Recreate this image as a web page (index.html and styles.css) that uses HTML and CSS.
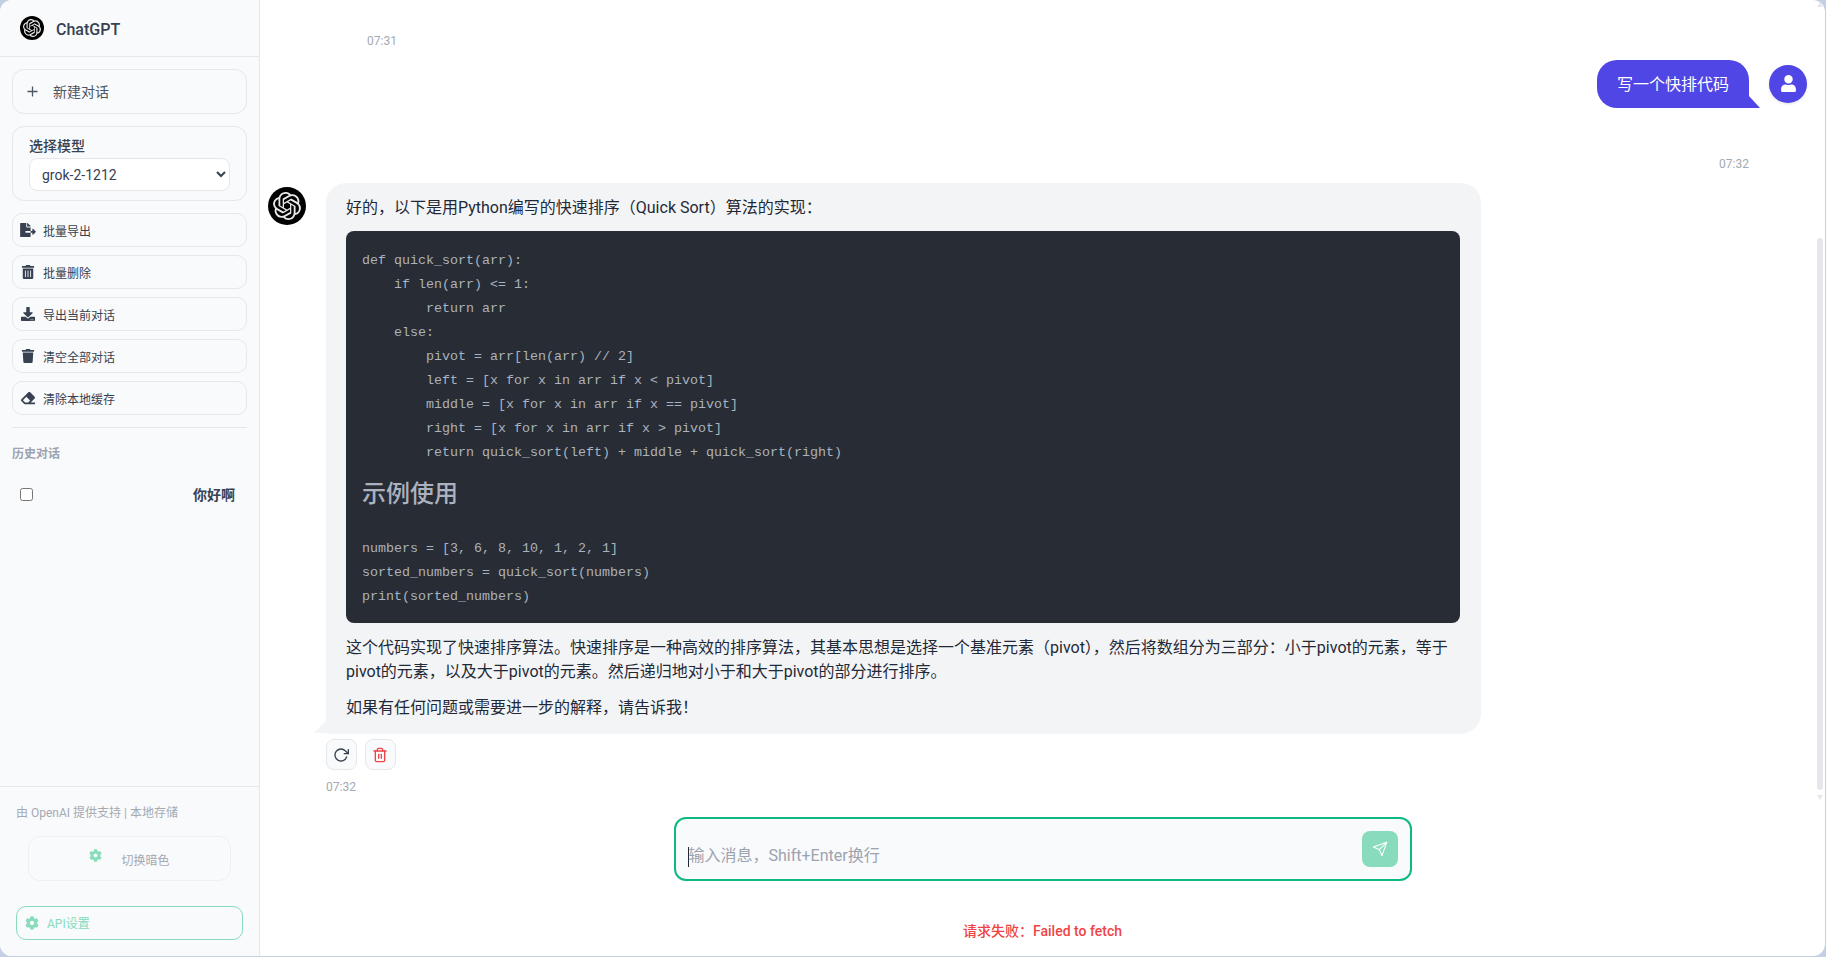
FILE: index.html
```html
<!DOCTYPE html>
<html lang="zh-CN">
<head>
<meta charset="utf-8">
<title>ChatGPT</title>
<link rel="stylesheet" href="styles.css">
</head>
<body>
<svg class="defs" width="0" height="0" aria-hidden="true">
  <symbol id="openai" viewBox="0 0 24 24"><path d="M22.2819 9.8211a5.9847 5.9847 0 0 0-.5157-4.9108 6.0462 6.0462 0 0 0-6.5098-2.9A6.0651 6.0651 0 0 0 4.9807 4.1818a5.9847 5.9847 0 0 0-3.9977 2.9 6.0462 6.0462 0 0 0 .7427 7.0966 5.98 5.98 0 0 0 .511 4.9107 6.051 6.051 0 0 0 6.5146 2.9001A5.9847 5.9847 0 0 0 13.2599 24a6.0557 6.0557 0 0 0 5.7718-4.2058 5.9894 5.9894 0 0 0 3.9977-2.9001 6.0557 6.0557 0 0 0-.7475-7.0729zm-9.022 12.6081a4.4755 4.4755 0 0 1-2.8764-1.0408l.1419-.0804 4.7783-2.7582a.7948.7948 0 0 0 .3927-.6813v-6.7369l2.02 1.1686a.071.071 0 0 1 .038.052v5.5826a4.504 4.504 0 0 1-4.4945 4.4944zm-9.6607-4.1254a4.4708 4.4708 0 0 1-.5346-3.0137l.142.0852 4.783 2.7582a.7712.7712 0 0 0 .7806 0l5.8428-3.3685v2.3324a.0804.0804 0 0 1-.0332.0615L9.74 19.9502a4.4992 4.4992 0 0 1-6.1408-1.6464zM2.3408 7.8956a4.485 4.485 0 0 1 2.3655-1.9728V11.6a.7664.7664 0 0 0 .3879.6765l5.8144 3.3543-2.0201 1.1685a.0757.0757 0 0 1-.071 0l-4.8303-2.7865A4.504 4.504 0 0 1 2.3408 7.872zm16.5963 3.8558L13.1038 8.364 15.1192 7.2a.0757.0757 0 0 1 .071 0l4.8303 2.7913a4.4944 4.4944 0 0 1-.6765 8.1042v-5.6772a.79.79 0 0 0-.407-.667zm2.0107-3.0231l-.142-.0852-4.7735-2.7818a.7759.7759 0 0 0-.7854 0L9.409 9.2297V6.8974a.0662.0662 0 0 1 .0284-.0615l4.8303-2.7866a4.4992 4.4992 0 0 1 6.6802 4.66zM8.3065 12.863l-2.02-1.1638a.0804.0804 0 0 1-.038-.0567V6.0742a4.4992 4.4992 0 0 1 7.3757-3.4537l-.142.0805L8.704 5.459a.7948.7948 0 0 0-.3927.6813zm1.0976-2.3654l2.602-1.4998 2.6069 1.4998v2.9994l-2.5974 1.4997-2.6067-1.4997Z"/></symbol>
  <symbol id="cog" viewBox="0 0 512 512"><path d="M487.4 315.7l-42.6-24.6c4.3-23.2 4.3-47 0-70.2l42.6-24.6c4.9-2.8 7.1-8.6 5.5-14-11.1-35.6-30-67.8-54.7-94.6-3.8-4.1-10-5.1-14.8-2.3L380.8 110c-17.9-15.4-38.5-27.3-60.8-35.1V25.8c0-5.6-3.9-10.5-9.4-11.7-36.7-8.2-74.3-7.8-109.2 0-5.5 1.2-9.4 6.1-9.4 11.7V75c-22.2 7.9-42.8 19.8-60.8 35.1L88.7 85.5c-4.9-2.8-11-1.9-14.8 2.3-24.7 26.7-43.6 58.9-54.7 94.6-1.7 5.4.6 11.2 5.5 14L67.3 221c-4.3 23.2-4.3 47 0 70.2l-42.6 24.6c-4.9 2.8-7.1 8.6-5.5 14 11.1 35.6 30 67.8 54.7 94.6 3.8 4.1 10 5.1 14.8 2.3l42.6-24.6c17.9 15.4 38.5 27.3 60.8 35.1v49.2c0 5.6 3.9 10.5 9.4 11.7 36.7 8.2 74.3 7.8 109.2 0 5.5-1.2 9.4-6.1 9.4-11.7v-49.2c22.2-7.9 42.8-19.8 60.8-35.1l42.6 24.6c4.9 2.8 11 1.9 14.8-2.3 24.7-26.7 43.6-58.9 54.7-94.6 1.5-5.5-.7-11.3-5.6-14.1zM256 336c-44.1 0-80-35.9-80-80s35.9-80 80-80 80 35.9 80 80-35.9 80-80 80z"/></symbol>
</svg>
<div class="app">
  <aside class="sidebar">
    <header class="brand">
      <span class="logo logo-small"><svg class="logo-mark"><use href="#openai"/></svg></span>
      <span class="brand-name">ChatGPT</span>
    </header>
    <div class="side-body">
      <button class="new-chat">
        <svg class="plus" viewBox="0 0 12 12"><path d="M6 .5v11M.5 6h11"/></svg>
        <span>新建对话</span>
      </button>
      <div class="model-box">
        <label class="model-label" for="model">选择模型</label>
        <select class="model-select" id="model"><option>grok-2-1212</option></select>
      </div>
      <div class="actions">
        <button class="action"><svg class="fa" viewBox="0 0 576 512"><path d="M384 121.9c0-6.3-2.5-12.4-7-16.9L279.1 7c-4.5-4.5-10.6-7-17-7H256v128h128zM571 308l-95.7-96.4c-10.1-10.1-27.4-3-27.4 11.3V288h-64v64h64v65.2c0 14.3 17.3 21.4 27.4 11.3L571 332c6.6-6.6 6.6-17.4 0-24zm-379 28v-32c0-8.8 7.2-16 16-16h176V160H248c-13.2 0-24-10.8-24-24V0H24C10.7 0 0 10.7 0 24v464c0 13.3 10.7 24 24 24h336c13.3 0 24-10.7 24-24V352H208c-8.8 0-16-7.2-16-16z"/></svg><span>批量导出</span></button>
        <button class="action"><svg class="fa" viewBox="0 0 448 512"><path d="M32 464a48 48 0 0 0 48 48h288a48 48 0 0 0 48-48V128H32zm272-256a16 16 0 0 1 32 0v224a16 16 0 0 1-32 0zm-96 0a16 16 0 0 1 32 0v224a16 16 0 0 1-32 0zm-96 0a16 16 0 0 1 32 0v224a16 16 0 0 1-32 0zM432 32H312l-9.4-18.7A24 24 0 0 0 281.1 0H166.8a23.72 23.72 0 0 0-21.4 13.3L136 32H16A16 16 0 0 0 0 48v32a16 16 0 0 0 16 16h416a16 16 0 0 0 16-16V48a16 16 0 0 0-16-16z"/></svg><span>批量删除</span></button>
        <button class="action"><svg class="fa" viewBox="0 0 512 512"><path d="M216 0h80c13.3 0 24 10.7 24 24v168h87.7c17.8 0 26.7 21.5 14.1 34.1L269.7 378.3c-7.5 7.5-19.8 7.5-27.3 0L90.1 226.1c-12.6-12.6-3.7-34.1 14.1-34.1H192V24c0-13.3 10.7-24 24-24zm296 376v112c0 13.3-10.7 24-24 24H24c-13.3 0-24-10.7-24-24V376c0-13.3 10.7-24 24-24h146.7l49 49c20.1 20.1 52.5 20.1 72.6 0l49-49H488c13.3 0 24 10.7 24 24zm-124 88c0-11-9-20-20-20s-20 9-20 20 9 20 20 20 20-9 20-20zm64 0c0-11-9-20-20-20s-20 9-20 20 9 20 20 20 20-9 20-20z"/></svg><span>导出当前对话</span></button>
        <button class="action"><svg class="fa" viewBox="0 0 448 512"><path d="M432 32H312l-9.4-18.7A24 24 0 0 0 281.1 0H166.8a23.72 23.72 0 0 0-21.4 13.3L136 32H16A16 16 0 0 0 0 48v32a16 16 0 0 0 16 16h416a16 16 0 0 0 16-16V48a16 16 0 0 0-16-16zM53.2 467a48 48 0 0 0 47.9 45h245.8a48 48 0 0 0 47.9-45L416 128H32z"/></svg><span>清空全部对话</span></button>
        <button class="action"><svg class="fa" viewBox="0 0 512 512"><path d="M497.941 273.941c18.745-18.745 18.745-49.137 0-67.882l-160-160c-18.745-18.745-49.136-18.746-67.883 0l-256 256c-18.745 18.745-18.745 49.137 0 67.882l96 96A48.004 48.004 0 0 0 144 480h356c6.627 0 12-5.373 12-12v-40c0-6.627-5.373-12-12-12H355.883l142.058-142.059zm-302.627-62.627l137.373 137.373L265.373 416H150.628l-80-80 124.686-124.686z"/></svg><span>清除本地缓存</span></button>
      </div>
      <hr class="divider">
      <div class="history-title">历史对话</div>
      <label class="history-item">
        <input class="history-check" type="checkbox">
        <span class="history-name">你好啊</span>
      </label>
    </div>
    <footer class="side-footer">
      <div class="powered">由 OpenAI 提供支持 | 本地存储</div>
      <button class="theme-btn"><svg class="theme-cog"><use href="#cog"/></svg><span>切换暗色</span></button>
      <button class="api-btn"><svg class="api-cog"><use href="#cog"/></svg><span>API设置</span></button>
    </footer>
  </aside>
  <main class="main">
    <section class="messages">
      <div class="time time-prev">07:31</div>
      <div class="user-row">
        <div class="user-bubble">写一个快排代码</div>
        <span class="user-avatar"><svg viewBox="0 0 448 512"><path d="M224 256c70.7 0 128-57.3 128-128S294.7 0 224 0 96 57.3 96 128s57.3 128 128 128zm89.6 32h-16.7c-22.2 10.2-46.9 16-72.9 16s-50.6-5.8-72.9-16h-16.7C60.2 288 0 348.2 0 422.4V464c0 26.5 21.5 48 48 48h352c26.5 0 48-21.5 48-48v-41.6c0-74.2-60.2-134.4-134.4-134.4z"/></svg></span>
      </div>
      <div class="time time-user">07:32</div>
      <div class="bot-row">
        <span class="logo logo-large"><svg class="logo-mark"><use href="#openai"/></svg></span>
        <div class="bot-col">
          <div class="bot-bubble">
            <p class="para para-first">好的，以下是用Python编写的快速排序（Quick Sort）算法的实现：</p>
            <div class="code">
<pre class="code-text">def quick_sort(arr):
    if len(arr) &lt;= 1:
        return arr
    else:
        pivot = arr[len(arr) // 2]
        left = [x for x in arr if x &lt; pivot]
        middle = [x for x in arr if x == pivot]
        right = [x for x in arr if x &gt; pivot]
        return quick_sort(left) + middle + quick_sort(right)</pre>
              <h2 class="code-heading">示例使用</h2>
<pre class="code-text">numbers = [3, 6, 8, 10, 1, 2, 1]
sorted_numbers = quick_sort(numbers)
print(sorted_numbers)</pre>
            </div>
            <p class="para para-after-code">这个代码实现了快速排序算法。快速排序是一种高效的排序算法，其基本思想是选择一个基准元素（pivot），然后将数组分为三部分：小于pivot的元素，等于pivot的元素，以及大于pivot的元素。然后递归地对小于和大于pivot的部分进行排序。</p>
            <p class="para">如果有任何问题或需要进一步的解释，请告诉我！</p>
          </div>
          <div class="msg-actions">
            <button class="msg-btn"><svg viewBox="0 0 24 24"><polyline points="23 4 23 10 17 10"/><path d="M20.49 15a9 9 0 1 1-2.12-9.36L23 10"/></svg></button>
            <button class="msg-btn msg-btn-danger"><svg viewBox="0 0 24 24"><polyline points="3 6 5 6 21 6"/><path d="M19 6v14a2 2 0 0 1-2 2H7a2 2 0 0 1-2-2V6m3 0V4a2 2 0 0 1 2-2h4a2 2 0 0 1 2 2v2"/><line x1="10" y1="11" x2="10" y2="17"/><line x1="14" y1="11" x2="14" y2="17"/></svg></button>
          </div>
          <div class="time time-bot">07:32</div>
        </div>
      </div>
      <div class="scrollbar" aria-hidden="true">
        <span class="arrow arrow-up"></span>
        <span class="thumb"></span>
        <span class="arrow arrow-down"></span>
      </div>
    </section>
    <section class="composer">
      <div class="input-box">
        <span class="caret"></span>
        <textarea class="input" rows="1" placeholder="输入消息，Shift+Enter换行"></textarea>
        <button class="send"><svg viewBox="0 0 24 24"><line x1="22" y1="2" x2="11" y2="13"/><polygon points="22 2 15 22 11 13 2 9 22 2"/></svg></button>
      </div>
      <div class="error">请求失败：Failed to fetch</div>
    </section>
  </main>
</div>
</body>
</html>
```

FILE: styles.css
```css
* { box-sizing: border-box; }
html, body { margin: 0; height: 100%; }
body {
  background: #c3cfe2;
  font-family: Roboto, "Noto Sans CJK SC", sans-serif;
  color: #1f2937;
  overflow: hidden;
}
button, select, textarea { font-family: inherit; }
.defs { position: absolute; }

.app {
  width: 1825px;
  height: 956px;
  display: flex;
  background: #fff;
  border-radius: 12px;
  overflow: hidden;
}

/* Sidebar */
.sidebar {
  width: 260px;
  flex: none;
  display: flex;
  flex-direction: column;
  background: #f9fafb;
  border-right: 1px solid #e5e7eb;
}
.brand {
  height: 57px;
  flex: none;
  display: flex;
  align-items: center;
  gap: 12px;
  padding: 0 20px;
  border-bottom: 1px solid #e5e7eb;
}
.brand-name { padding-top: 2px; font-size: 16px; font-weight: 500; color: #374151; }
.logo {
  display: flex;
  align-items: center;
  justify-content: center;
  flex: none;
  background: #000;
  border-radius: 50%;
}
.logo-mark { fill: #e8e8e8; display: block; }
.logo-small { width: 24px; height: 24px; }
.logo-small .logo-mark { width: 18px; height: 18px; }
.logo-large { width: 38px; height: 38px; margin-top: 4px; }
.logo-large .logo-mark { width: 28px; height: 28px; }

.side-body {
  flex: 1;
  padding: 12px;
  display: flex;
  flex-direction: column;
  min-height: 0;
}
.new-chat {
  height: 45px;
  display: flex;
  align-items: center;
  gap: 15px;
  padding: 0 14px 1px;
  background: #f9fafb;
  border: 1px solid #e5e7eb;
  border-radius: 12px;
  font-size: 14px;
  color: #4b5563;
}
.plus { width: 11px; height: 11px; fill: none; stroke: #4b5563; stroke-width: 1.4; }
.model-box {
  margin-top: 12px;
  height: 75px;
  padding: 9px 16px 0;
  border: 1px solid #e5e7eb;
  border-radius: 12px;
}
.model-label {
  display: block;
  font-size: 14px;
  font-weight: 500;
  line-height: 20px;
  color: #374151;
  margin-bottom: 2px;
}
.model-select {
  width: 100%;
  height: 33px;
  padding: 0 8px;
  font-size: 14px;
  color: #374151;
  background: #fff;
  border: 1px solid #e5e7eb;
  border-radius: 8px;
}
.actions {
  margin-top: 12px;
  display: flex;
  flex-direction: column;
  gap: 8px;
}
.action {
  height: 34px;
  display: flex;
  align-items: center;
  gap: 7px;
  padding: 0 7px;
  background: #f9fafb;
  border: 1px solid #e5e7eb;
  border-radius: 10px;
  font-size: 12px;
  color: #374151;
}
.fa { width: 16px; height: 14px; fill: #374151; flex: none; }
.divider {
  margin: 12px 0 0;
  border: 0;
  border-top: 1px solid #e5e7eb;
}
.history-title {
  margin-top: 18px;
  font-size: 12px;
  font-weight: 700;
  line-height: 16px;
  color: #9ca3af;
}
.history-item {
  margin-top: 22px;
  display: flex;
  align-items: center;
  justify-content: space-between;
  padding: 0 12px 0 8px;
}
.history-check { width: 13px; height: 13px; margin: 1px 0 0; }
.history-name { font-size: 14px; font-weight: 700; color: #374151; }

.side-footer {
  flex: none;
  height: 170px;
  padding: 18px 16px 0;
  border-top: 1px solid #e5e7eb;
}
.powered { font-size: 12px; line-height: 16px; color: #a4a9b2; }
.theme-btn {
  display: flex;
  align-items: center;
  justify-content: center;
  gap: 19px;
  width: 203px;
  height: 45px;
  margin: 15px 0 0 12px;
  padding-top: 3px;
  background: #f9fafb;
  border: 1px solid #eff0f3;
  border-radius: 12px;
  font-size: 12px;
  color: #a4a9b2;
}
.theme-cog { width: 13px; height: 13px; fill: #86dcbb; margin-top: -8px; }
.api-btn {
  display: flex;
  align-items: center;
  gap: 8px;
  width: 227px;
  height: 34px;
  margin-top: 25px;
  padding: 0 8px 1px;
  background: #f9fafb;
  border: 1px solid #86dcbb;
  border-radius: 10px;
  font-size: 12px;
  color: #86dcbb;
}
.api-cog { width: 14px; height: 14px; fill: #86dcbb; }

/* Main */
.main {
  flex: 1;
  min-width: 0;
  display: flex;
  flex-direction: column;
}
.messages {
  position: relative;
  flex: 1;
  min-height: 0;
  overflow: hidden;
  padding: 33px 18px 0 8px;
}
.time { font-size: 12px; line-height: 16px; color: #a4a9b2; }
.time-prev { margin-left: 99px; }
.user-row {
  margin-top: 11px;
  display: flex;
  justify-content: flex-end;
  align-items: center;
  gap: 20px;
}
.user-bubble {
  position: relative;
  height: 48px;
  padding: 0 20px 2px;
  display: flex;
  align-items: center;
  font-size: 16px;
  color: #fff;
  background: #4f46e5;
  border-radius: 20px 20px 0 20px;
}
.user-bubble::after {
  content: "";
  position: absolute;
  right: -11px;
  bottom: 0;
  width: 11px;
  height: 12px;
  background: #4f46e5;
  clip-path: polygon(0 0, 100% 100%, 0 100%);
}
.user-avatar {
  width: 38px;
  height: 38px;
  flex: none;
  margin-top: -1px;
  display: flex;
  align-items: center;
  justify-content: center;
  background: #4f46e5;
  border-radius: 50%;
  box-shadow: 0 1px 3px rgba(0, 0, 0, .12);
}
.user-avatar svg { width: 15px; height: 17px; fill: #fff; }
.time-user { margin: 48px 58px 0 0; text-align: right; }
.bot-row {
  margin-top: 11px;
  display: flex;
  align-items: flex-start;
  gap: 20px;
}
.bot-col { width: 1155px; flex: none; }
.bot-bubble {
  position: relative;
  padding: 12px 21px 13px 20px;
  background: #f3f4f6;
  border-radius: 20px 20px 20px 0;
  box-shadow: 0 1px 1px rgba(0, 0, 0, .03);
}
.bot-bubble::before {
  content: "";
  position: absolute;
  left: -12px;
  bottom: 0;
  width: 12px;
  height: 12px;
  background: #f3f4f6;
  clip-path: polygon(100% 0, 100% 100%, 0 100%);
}
.para {
  margin: 11px 0 0;
  padding-top: 1px;
  font-size: 16px;
  line-height: 24px;
  color: #1f2937;
}
.para-first { margin: 0 0 11px; }
.para-after-code { margin-top: 12px; }
.code {
  padding: 18px 16px 14px;
  background: #282c34;
  border-radius: 8px;
  color: #abb2bf;
}
.code-text {
  margin: 0;
  font-family: "Liberation Mono", monospace;
  font-size: 13.33px;
  line-height: 24px;
}
.code-heading {
  margin: 11px 0 25px;
  font-size: 24px;
  line-height: 36px;
  font-weight: 500;
  color: #abb2bf;
}
.msg-actions {
  margin-top: 6px;
  display: flex;
  gap: 8px;
}
.msg-btn {
  width: 31px;
  height: 31px;
  padding: 0;
  display: flex;
  align-items: center;
  justify-content: center;
  background: #f9fafb;
  border: 1px solid #e5e7eb;
  border-radius: 8px;
}
.msg-btn svg { width: 16px; height: 16px; margin-left: -1px; fill: none; stroke: #374151; stroke-width: 2; stroke-linecap: round; stroke-linejoin: round; }
.msg-btn-danger svg { stroke: #ef4444; }
.time-bot { margin-top: 9px; }

.scrollbar {
  position: absolute;
  top: 2px;
  right: 2px;
  bottom: 0;
  width: 6px;
}
.thumb {
  position: absolute;
  top: 236px;
  left: 0;
  width: 6px;
  height: 552px;
  background: #e5e7eb;
  border-radius: 3px;
}
.arrow {
  position: absolute;
  left: 0;
  width: 6px;
  height: 5px;
  background: #e5e7eb;
}
.arrow-up { top: 0; clip-path: polygon(50% 0, 100% 100%, 0 100%); }
.arrow-down { top: 793px; clip-path: polygon(0 0, 100% 0, 50% 100%); }

/* Composer */
.composer {
  flex: none;
  height: 156px;
  padding-top: 17px;
  display: flex;
  flex-direction: column;
  align-items: center;
}
.input-box {
  position: relative;
  width: 738px;
  height: 64px;
  flex: none;
  display: flex;
  align-items: center;
  gap: 12px;
  padding: 0 12px 0 13px;
  background: #f9fafb;
  border: 2px solid #10b981;
  border-radius: 12px;
}
.caret {
  position: absolute;
  left: 12px;
  top: 28px;
  width: 1px;
  height: 20px;
  background: #1f2937;
}
.input {
  flex: 1;
  height: 24px;
  margin-top: 14px;
  padding: 0;
  border: 0;
  outline: 0;
  resize: none;
  background: transparent;
  font-size: 16px;
  line-height: 24px;
  color: #1f2937;
}
.input::placeholder { color: #9ca3af; opacity: 1; }
.send {
  width: 36px;
  height: 36px;
  flex: none;
  padding: 0;
  display: flex;
  align-items: center;
  justify-content: center;
  background: #88dbbd;
  border: 0;
  border-radius: 8px;
}
.send svg { width: 16px; height: 16px; fill: none; stroke: #fff; stroke-width: 1.6; stroke-linejoin: round; stroke-linecap: round; }
.error {
  margin-top: 41px;
  font-size: 14px;
  font-weight: 500;
  line-height: 18px;
  color: #ef4444;
}
```
